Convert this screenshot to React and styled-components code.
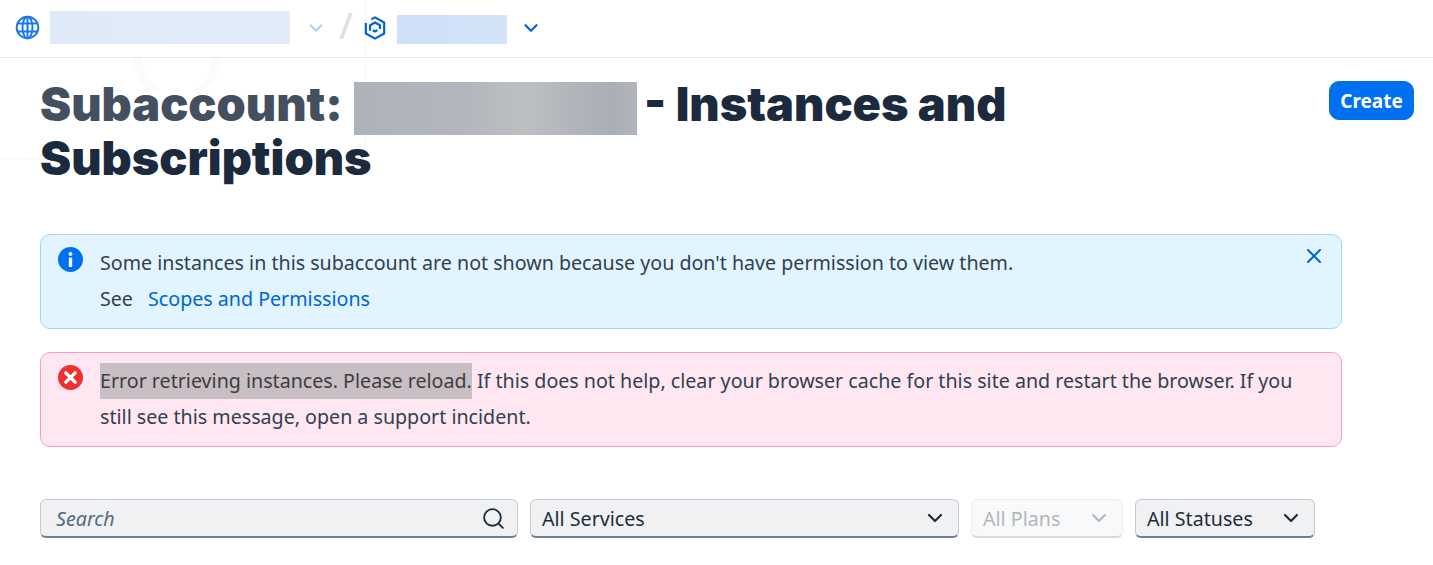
import React from "react";
import styled, { createGlobalStyle } from "styled-components";
import { ChevronDown, Search as SearchIcon, X } from "lucide-react";

const GlobalStyle = createGlobalStyle`
  html, body {
    margin: 0;
    padding: 0;
    background: #fff;
    font-family: "Noto Sans", "Liberation Sans", sans-serif;
    color: #32363a;
  }
`;

const Page = styled.div`
  position: relative;
  width: 1433px;
  height: 565px;
  overflow: hidden;
`;

// faint tooltip ghost left over in the capture
const Ghost = styled.div`
  position: absolute;
  top: 0;
  left: 0;
  width: 365px;
  height: 158px;
  border-right: 2px solid #fafafa;
  border-bottom: 2px solid #fafafa;
`;

const GhostClip = styled.div`
  position: absolute;
  top: 58px;
  left: 134px;
  width: 90px;
  height: 32px;
  overflow: hidden;
`;

const GhostRing = styled.div`
  width: 70px;
  height: 70px;
  margin-top: -42px;
  border: 8px solid #fbfbfb;
  border-radius: 50%;
`;

const TopBar = styled.header`
  position: relative;
  display: flex;
  align-items: center;
  height: 55px;
  padding: 0 0 2px 15px;
  border-bottom: 1px solid #e8e8e8;
  box-sizing: content-box;
`;

const Blur = styled.div`
  width: ${p => p.$w}px;
  height: ${p => p.$h}px;
  background: ${p => p.$bg};
  margin: ${p => p.$m};
`;

const Slash = styled.span`
  font-size: 36px;
  font-weight: 500;
  line-height: 1;
  color: #e0e0e0;
  margin: -4px 11px 0 12px;
`;

const Content = styled.main`
  position: relative;
  padding: 0 19px 0 40px;
`;

const TitleRow = styled.div`
  display: flex;
  justify-content: space-between;
  align-items: flex-start;
  padding-top: 23px;
`;

const Title = styled.h1`
  width: 1100px;
  height: 108px;
  margin: -4px 0 0;
  font-family: "Inter", "Noto Sans", sans-serif;
  font-size: 46.8px;
  font-weight: 900;
  line-height: 54px;
  color: #1b2a3c;
`;

const TitleLead = styled.span`
  color: #44505f;
`;

const TitleBlur = styled.span`
  display: inline-block;
  width: 283px;
  height: 53px;
  margin: 0 7px -6px 2px;
  vertical-align: -8px;
  background: linear-gradient(90deg, #aeb2ba 0%, #b3b7bd 40%, #bcc0c3 60%, #aaaeb6 90%, #b0b4bb 100%);
`;

const CreateButton = styled.button`
  width: 85px;
  height: 39px;
  padding: 0;
  border: 1px solid #0a6ed1;
  border-radius: 10px;
  background: #0070f2;
  color: #fff;
  font-family: "Noto Sans", sans-serif;
  font-size: 19px;
  font-weight: 700;
`;

const Alert = styled.section`
  position: relative;
  display: flex;
  width: 1302px;
  height: 95px;
  box-sizing: border-box;
  margin-top: ${p => p.$mt}px;
  padding: 10px 16px 0 17px;
  gap: 17px;
  border: 1px solid ${p => p.$line};
  border-radius: 10px;
  background: ${p => p.$bg};
`;

const AlertIcon = styled.svg`
  flex: none;
  width: 25px;
  height: 25px;
  margin-top: 2px;
`;

const AlertText = styled.div`
  flex: 1;
  font-size: 19.65px;
  line-height: 36px;
  color: #32404f;
`;

const Link = styled.a`
  margin-left: 10px;
  color: #0064d9;
`;

const Mark = styled.span`
  display: inline-block;
  background: #c8bfc4;
  color: #3d3d40;
`;

const Close = styled.button`
  position: absolute;
  top: 9px;
  right: 15px;
  display: flex;
  padding: 0;
  border: none;
  background: none;
  color: #0064d9;
`;

const Filters = styled.div`
  display: flex;
  gap: 12px;
  margin-top: 52px;
`;

const Field = styled.div`
  display: flex;
  align-items: center;
  justify-content: space-between;
  width: ${p => p.$w}px;
  height: 39px;
  box-sizing: border-box;
  padding: 0 ${p => p.$pr}px 0 ${p => p.$pl}px;
  border: 1px solid ${p => (p.$off ? "#eceef0" : "#c5cbd2")};
  border-bottom: 2px solid ${p => (p.$off ? "#d5dae0" : "#6f8093")};
  border-radius: 6px;
  background: ${p => (p.$off ? "#f8f9fa" : "#eff1f3")};
  font-size: 19.65px;
  color: ${p => (p.$off ? "#b3b6b9" : "#1d2d3e")};
`;

const Placeholder = styled.span`
  font-style: italic;
  color: #556b82;
`;

const GlobeGlyph = () => (
  <svg width="25" height="25" viewBox="0 0 25 25" fill="none" stroke="#1b78e8" strokeWidth="2">
    <circle cx="12.5" cy="12.5" r="10.8" />
    <ellipse cx="12.5" cy="12.5" rx="5" ry="10.8" />
    <path d="M12.5 1.7V23.3M2.8 8.5H22.2M2.8 16.5H22.2" />
  </svg>
);

const InfoGlyph = () => (
  <AlertIcon viewBox="0 0 24 24">
    <circle cx="12" cy="12" r="12" fill="#0070f2" />
    <circle cx="12" cy="6.6" r="1.9" fill="#fff" />
    <rect x="10.4" y="10" width="3.2" height="9.2" rx="0.8" fill="#fff" />
  </AlertIcon>
);

const ErrorGlyph = () => (
  <AlertIcon viewBox="0 0 24 24">
    <circle cx="12" cy="12" r="12" fill="#ee3030" />
    <path d="M7.5 7.5l9 9M16.5 7.5l-9 9" stroke="#fff" strokeWidth="3.2" strokeLinecap="round" />
  </AlertIcon>
);

const SubaccountGlyph = () => (
  <svg width="22" height="24" viewBox="0 0 24 26" fill="none" stroke="#0064d9" strokeWidth="2.4" strokeLinejoin="round">
    <path d="M8 3.4 12 1.4 22 7V19L12 24.6 2 19V7.6" />
    <path d="M6.6 16V10L12 7 17.4 10V14" />
    <path d="M9.6 15.4 12 16.8 14.6 15.2" />
  </svg>
);

export default function App() {
  return (
    <Page>
      <GlobalStyle />
      <Ghost />
      <GhostClip>
        <GhostRing />
      </GhostClip>
      <TopBar>
        <GlobeGlyph />
        <Blur $w={240} $h={33} $bg="linear-gradient(90deg, #dfeaf8, #e3edf9)" $m="0 15px 0 10px" />
        <ChevronDown size={22} color="#a9cdf5" strokeWidth={2} />
        <Slash>/</Slash>
        <SubaccountGlyph />
        <Blur $w={110} $h={29} $bg="linear-gradient(90deg, #cfe0f7, #d3e3f8)" $m="4px 13px 0 11px" />
        <ChevronDown size={22} color="#0064d9" strokeWidth={2.4} />
      </TopBar>
      <Content>
        <TitleRow>
          <Title>
            <TitleLead>Subaccount: </TitleLead>
            <TitleBlur />- Instances and Subscriptions
          </Title>
          <CreateButton>Create</CreateButton>
        </TitleRow>
        <Alert $mt={49} $bg="#e1f4ff" $line="#9bd8fb">
          <InfoGlyph />
          <AlertText>
            Some instances in this subaccount are not shown because you don't have permission to view them.
            <br />
            See <Link>Scopes and Permissions</Link>
          </AlertText>
          <Close>
            <X size={24} strokeWidth={2} />
          </Close>
        </Alert>
        <Alert $mt={23} $bg="#ffe7f2" $line="#f99bcd">
          <ErrorGlyph />
          <AlertText>
            <Mark>Error retrieving instances. Please reload.</Mark> If this does not help, clear your browser cache for this site and restart the browser. If you still see this message, open a support incident.
          </AlertText>
        </Alert>
        <Filters>
          <Field $w={478} $pl={15} $pr={11}>
            <Placeholder>Search</Placeholder>
            <SearchIcon size={25} color="#1d2d3e" strokeWidth={1.8} />
          </Field>
          <Field $w={429} $pl={11} $pr={11}>
            All Services
            <ChevronDown size={24} color="#1d2d3e" strokeWidth={2.2} />
          </Field>
          <Field $w={152} $pl={11} $pr={11} $off>
            All Plans
            <ChevronDown size={24} color="#b3b6b9" strokeWidth={2} />
          </Field>
          <Field $w={180} $pl={11} $pr={11}>
            All Statuses
            <ChevronDown size={24} color="#1d2d3e" strokeWidth={2.2} />
          </Field>
        </Filters>
      </Content>
    </Page>
  );
}
